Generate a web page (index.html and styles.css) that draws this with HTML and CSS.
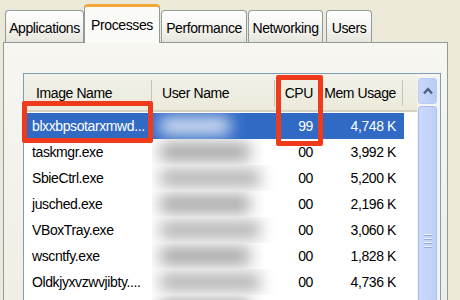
FILE: index.html
```html
<!DOCTYPE html>
<html lang="en">
<head>
  <meta charset="UTF-8">
  <title>Windows Task Manager - Processes</title>
  <link rel="stylesheet" href="styles.css">
</head>
<body>
  <div class="window">
    <div class="tabs">
      <div class="tab tab-apps">Applications</div>
      <div class="tab tab-proc active">Processes</div>
      <div class="tab tab-perf">Performance</div>
      <div class="tab tab-net">Networking</div>
      <div class="tab tab-users">Users</div>
    </div>

    <div class="panel">
      <div class="listview">
        <div class="list">
          <div class="row head">
            <div class="cell name">Image Name</div>
            <div class="cell user">User Name</div>
            <div class="cell num">CPU</div>
            <div class="cell num mem">Mem Usage</div>
            <div class="cell"></div>
          </div>
          <div class="row selected">
            <div class="cell name">blxxbpsotarxmwd...</div>
            <div class="cell user"><span class="blur"></span></div>
            <div class="cell num">99</div>
            <div class="cell num mem">4,748 K</div>
          </div>
          <div class="row">
            <div class="cell name">taskmgr.exe</div>
            <div class="cell user"><span class="blur"></span></div>
            <div class="cell num">00</div>
            <div class="cell num mem">3,992 K</div>
          </div>
          <div class="row">
            <div class="cell name">SbieCtrl.exe</div>
            <div class="cell user"><span class="blur"></span></div>
            <div class="cell num">00</div>
            <div class="cell num mem">5,200 K</div>
          </div>
          <div class="row">
            <div class="cell name">jusched.exe</div>
            <div class="cell user"><span class="blur"></span></div>
            <div class="cell num">00</div>
            <div class="cell num mem">2,196 K</div>
          </div>
          <div class="row">
            <div class="cell name">VBoxTray.exe</div>
            <div class="cell user"><span class="blur"></span></div>
            <div class="cell num">00</div>
            <div class="cell num mem">3,060 K</div>
          </div>
          <div class="row">
            <div class="cell name">wscntfy.exe</div>
            <div class="cell user"><span class="blur"></span></div>
            <div class="cell num">00</div>
            <div class="cell num mem">1,828 K</div>
          </div>
          <div class="row">
            <div class="cell name">Oldkjyxvzwvjibty....</div>
            <div class="cell user"><span class="blur"></span></div>
            <div class="cell num">00</div>
            <div class="cell num mem">4,736 K</div>
          </div>
          <div class="row">
            <div class="cell name">Wuauclt.exe</div>
            <div class="cell user"><span class="blur"></span></div>
            <div class="cell num">00</div>
            <div class="cell num mem">1,474 K</div>
          </div>
        </div>

        <div class="scrollbar">
          <div class="sb-up">
            <svg width="10" height="8" viewBox="0 0 10 8"><polyline points="1,6.5 5,2 9,6.5" fill="none" stroke="#4d6185" stroke-width="2.4"/></svg>
          </div>
          <div class="sb-thumb"><div class="grip"></div></div>
        </div>

        <div class="mark mark-name"></div>
        <div class="mark mark-cpu"></div>
      </div>
    </div>
  </div>
</body>
</html>
```

FILE: styles.css
```css
body {
  margin: 0;
  background: #ece9d8;
  font-family: "Liberation Sans", Arial, sans-serif;
  font-size: 14px;
  letter-spacing: -0.4px;
  color: #000;
}
.window {
  width: 460px;
  height: 300px;
  overflow: hidden;
}

/* tabs */
.tabs {
  display: flex;
  align-items: flex-end;
  height: 42px;
  padding-left: 5px;
}
.tab {
  box-sizing: border-box;
  height: 32px;
  padding-top: 3px;
  margin-right: 1px;
  border: 1px solid #919b9c;
  border-bottom: none;
  border-radius: 4px 4px 0 0;
  background: linear-gradient(#ffffff, #f3f2ed 60%, #e6e5dd);
  display: flex;
  align-items: center;
  justify-content: center;
}
.tab.active {
  position: relative;
  z-index: 2;
  height: 39px;
  margin-bottom: -1px;
  padding-top: 0;
  padding-bottom: 1px;
  border-top: 3px solid #f3a737;
  background: #fbfbf8;
}
.tab-apps { width: 79px; }
.tab-proc { width: 76px; margin-left: -1px; }
.tab-perf { width: 86px; }
.tab-net { width: 75px; margin-right: 3px; }
.tab-users { width: 46px; }

/* panel */
.panel {
  margin: 0 12px 0 3px;
  height: 270px;
  border: 1px solid #919b9c;
  border-bottom: none;
  background: linear-gradient(#f7f6f1, #efede3);
  padding: 30px 6px 0 19px;
}
.listview {
  position: relative;
  display: flex;
  height: 300px;
  border: 1px solid #7f9db9;
  background: #fff;
}
.list {
  flex: 1;
}

/* rows */
.row {
  display: grid;
  grid-template-columns: 128px 123px 48px 80px 1fr;
  height: 26px;
  align-items: center;
}
.row.head {
  height: 36px;
  margin-bottom: 1px;
  background: linear-gradient(#f2f1ea, #ebeadb);
  border-bottom: 2px solid #d6d2c2;
}
.head .cell {
  position: relative;
  height: 100%;
  display: flex;
  align-items: center;
  padding-top: 2px;
}
.head .cell.num {
  justify-content: flex-end;
}
.head .cell.name { padding-left: 12px; }
.head .cell.user { padding-left: 10px; }
.head .cell:not(:last-child)::after {
  content: "";
  position: absolute;
  right: 0;
  top: 6px;
  bottom: 4px;
  width: 1px;
  background: #c7c5b2;
  box-shadow: 1px 0 0 #fff;
}
.cell {
  box-sizing: border-box;
  white-space: nowrap;
  overflow: hidden;
}
.cell.name { padding-left: 8px; }
.cell.num {
  text-align: right;
  padding-right: 10px;
}
.cell.mem { padding-right: 7px; }

.row.selected {
  background: linear-gradient(90deg, transparent 1px, #316ac5 1px);
  background-size: 380px 100%;
  background-repeat: no-repeat;
  color: #fff;
}

/* hidden user names */
.user {
  height: 100%;
  display: flex;
  align-items: center;
}
.blur {
  display: block;
  width: 100px;
  height: 18px;
  margin-left: 8px;
  background: #b0b0b0;
  filter: blur(8px);
}
.row:nth-child(odd) .blur {
  width: 90px;
  background: #a2a2a2;
}
.selected .blur {
  background: #dde6f5;
  width: 70px;
}

/* scrollbar */
.scrollbar {
  width: 19px;
  padding: 4px 3px 0 1px;
  background: #f4f4f0;
}
.sb-up {
  box-sizing: border-box;
  height: 26px;
  border: 1px solid #b8cbf3;
  border-radius: 3px;
  background: linear-gradient(90deg, #c9d7fa, #bacdf7);
  display: flex;
  align-items: center;
  justify-content: center;
}
.sb-thumb {
  box-sizing: border-box;
  height: 280px;
  margin-top: 2px;
  border: 1px solid #a9bff2;
  border-radius: 3px;
  background: linear-gradient(90deg, #cbd9fb, #bdd0f8);
  padding-top: 127px;
}
.grip {
  width: 8px;
  height: 15px;
  margin: 0 auto;
  background: repeating-linear-gradient(#eef3fe 0 1px, #8ea9ec 1px 2px, transparent 2px 4px);
}

/* red annotation boxes */
.mark {
  position: absolute;
  box-sizing: border-box;
  border: 5px solid #ef3b1b;
  border-radius: 2px;
}
.mark-name {
  left: -2px;
  top: 27px;
  width: 131px;
  height: 42px;
}
.mark-cpu {
  left: 252px;
  top: 1px;
  width: 47px;
  height: 71px;
}
```
